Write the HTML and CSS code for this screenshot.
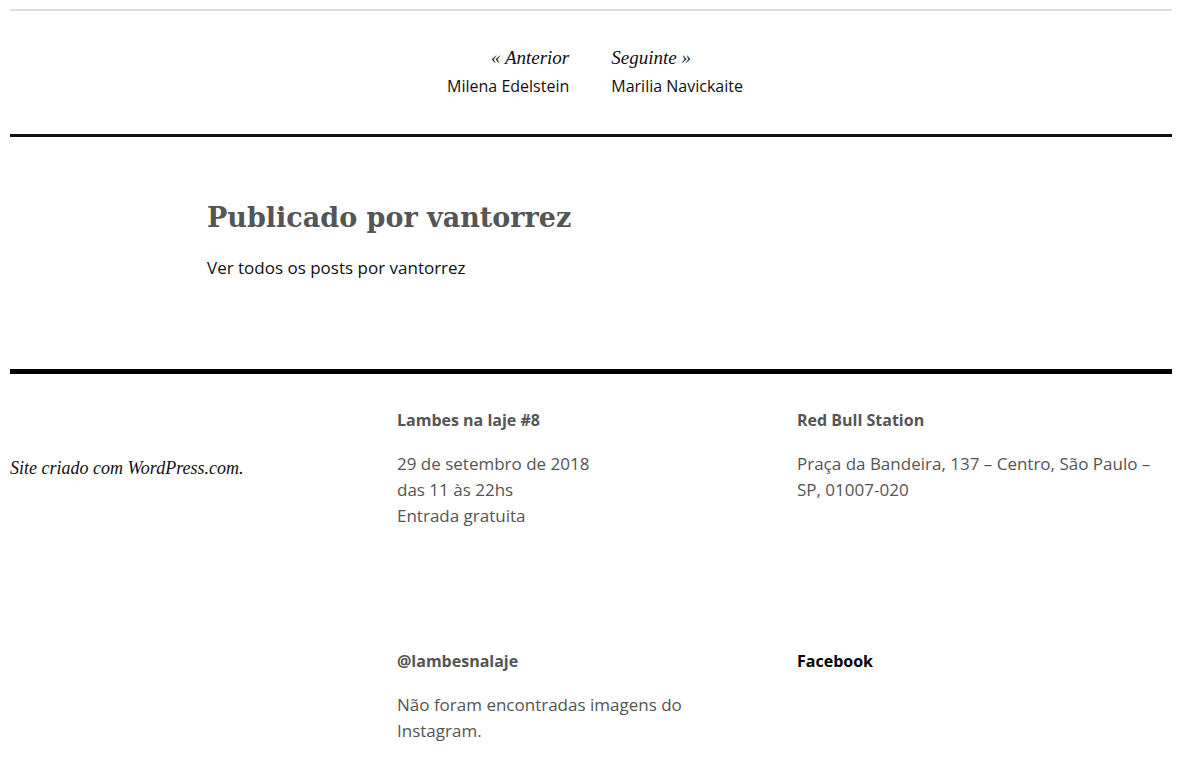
FILE: index.html
```html
<!DOCTYPE html>
<html lang="pt-BR">
<head>
    <meta charset="UTF-8">
    <meta name="viewport" content="width=device-width, initial-scale=1.0">
    <title>Lambes na laje</title>
    <link rel="stylesheet" href="styles.css">
</head>
<body>
    <div class="page">
        <div class="rule-light"></div>

        <nav class="post-nav">
            <a class="nav-prev" href="#">
                <span class="nav-label">&laquo; Anterior</span>
                <span class="nav-title">Milena Edelstein</span>
            </a>
            <a class="nav-next" href="#">
                <span class="nav-label">Seguinte &raquo;</span>
                <span class="nav-title">Marilia Navickaite</span>
            </a>
        </nav>

        <div class="rule-dark"></div>

        <section class="author-info">
            <h2 class="author-title">Publicado por vantorrez</h2>
            <a class="author-link" href="#">Ver todos os posts por vantorrez</a>
        </section>

        <div class="rule-heavy"></div>

        <footer class="site-footer">
            <div class="site-info">
                <a href="#">Site criado com WordPress.com</a>.
            </div>
            <div class="widgets">
                <div class="widget">
                    <h3 class="widget-title">Lambes na laje #8</h3>
                    <p>29 de setembro de 2018<br>das 11 às 22hs<br>Entrada gratuita</p>
                </div>
                <div class="widget">
                    <h3 class="widget-title">Red Bull Station</h3>
                    <p>Praça da Bandeira, 137 – Centro, São Paulo – SP, 01007-020</p>
                </div>
                <div class="widget">
                    <h3 class="widget-title">@lambesnalaje</h3>
                    <p>Não foram encontradas imagens do Instagram.</p>
                </div>
                <div class="widget">
                    <h3 class="widget-title"><a href="#">Facebook</a></h3>
                </div>
            </div>
        </footer>
    </div>
</body>
</html>
```

FILE: styles.css
```css
body {
    margin: 0;
    font-family: "Open Sans", "Noto Sans", sans-serif;
    font-size: 17px;
    line-height: 26px;
    color: #111;
    background: #fff;
}
a {
    color: inherit;
    text-decoration: none;
}
.page {
    margin: 0 5px 0 10px;
}

/* horizontal rules */
.rule-light {
    margin-top: 9px;
    height: 2px;
    background: #ddd;
}
.rule-dark {
    height: 3px;
    background: #111;
}
.rule-heavy {
    height: 5px;
    background: #000;
}

/* previous / next post */
.post-nav {
    display: flex;
    justify-content: center;
    gap: 42px;
    padding: 32px 0 33px 8px;
}
.post-nav a {
    display: flex;
    flex-direction: column;
}
.nav-prev {
    align-items: flex-end;
}
.nav-next {
    align-items: flex-start;
}
.nav-label {
    font-family: "Liberation Serif", serif;
    font-style: italic;
    font-size: 19px;
    line-height: 29px;
}
.nav-title {
    font-size: 16px;
    line-height: 29px;
}

/* author box */
.author-info {
    padding: 61px 0 88px 197px;
}
.author-title {
    margin: 0 0 17px;
    font-family: "DejaVu Serif", serif;
    font-weight: bold;
    font-size: 27px;
    line-height: 40px;
    color: #555;
}
.author-link {
    display: block;
}

/* footer */
.site-footer {
    display: flex;
    padding-top: 33px;
    color: #555;
}
.site-info {
    width: 387px;
    flex-shrink: 0;
    padding-top: 48px;
    font-family: "Liberation Serif", serif;
    font-style: italic;
    font-size: 18px;
    color: #111;
}
.widgets {
    flex: 1;
    display: grid;
    grid-template-columns: 400px 1fr;
    row-gap: 119px;
    padding-bottom: 40px;
}
.widget p {
    margin: 18px 0 0;
    max-width: 365px;
}
.widget-title {
    margin: 0;
    font-size: 16px;
    line-height: 26px;
    font-weight: bold;
}
.widget-title a {
    color: #000;
}
```
